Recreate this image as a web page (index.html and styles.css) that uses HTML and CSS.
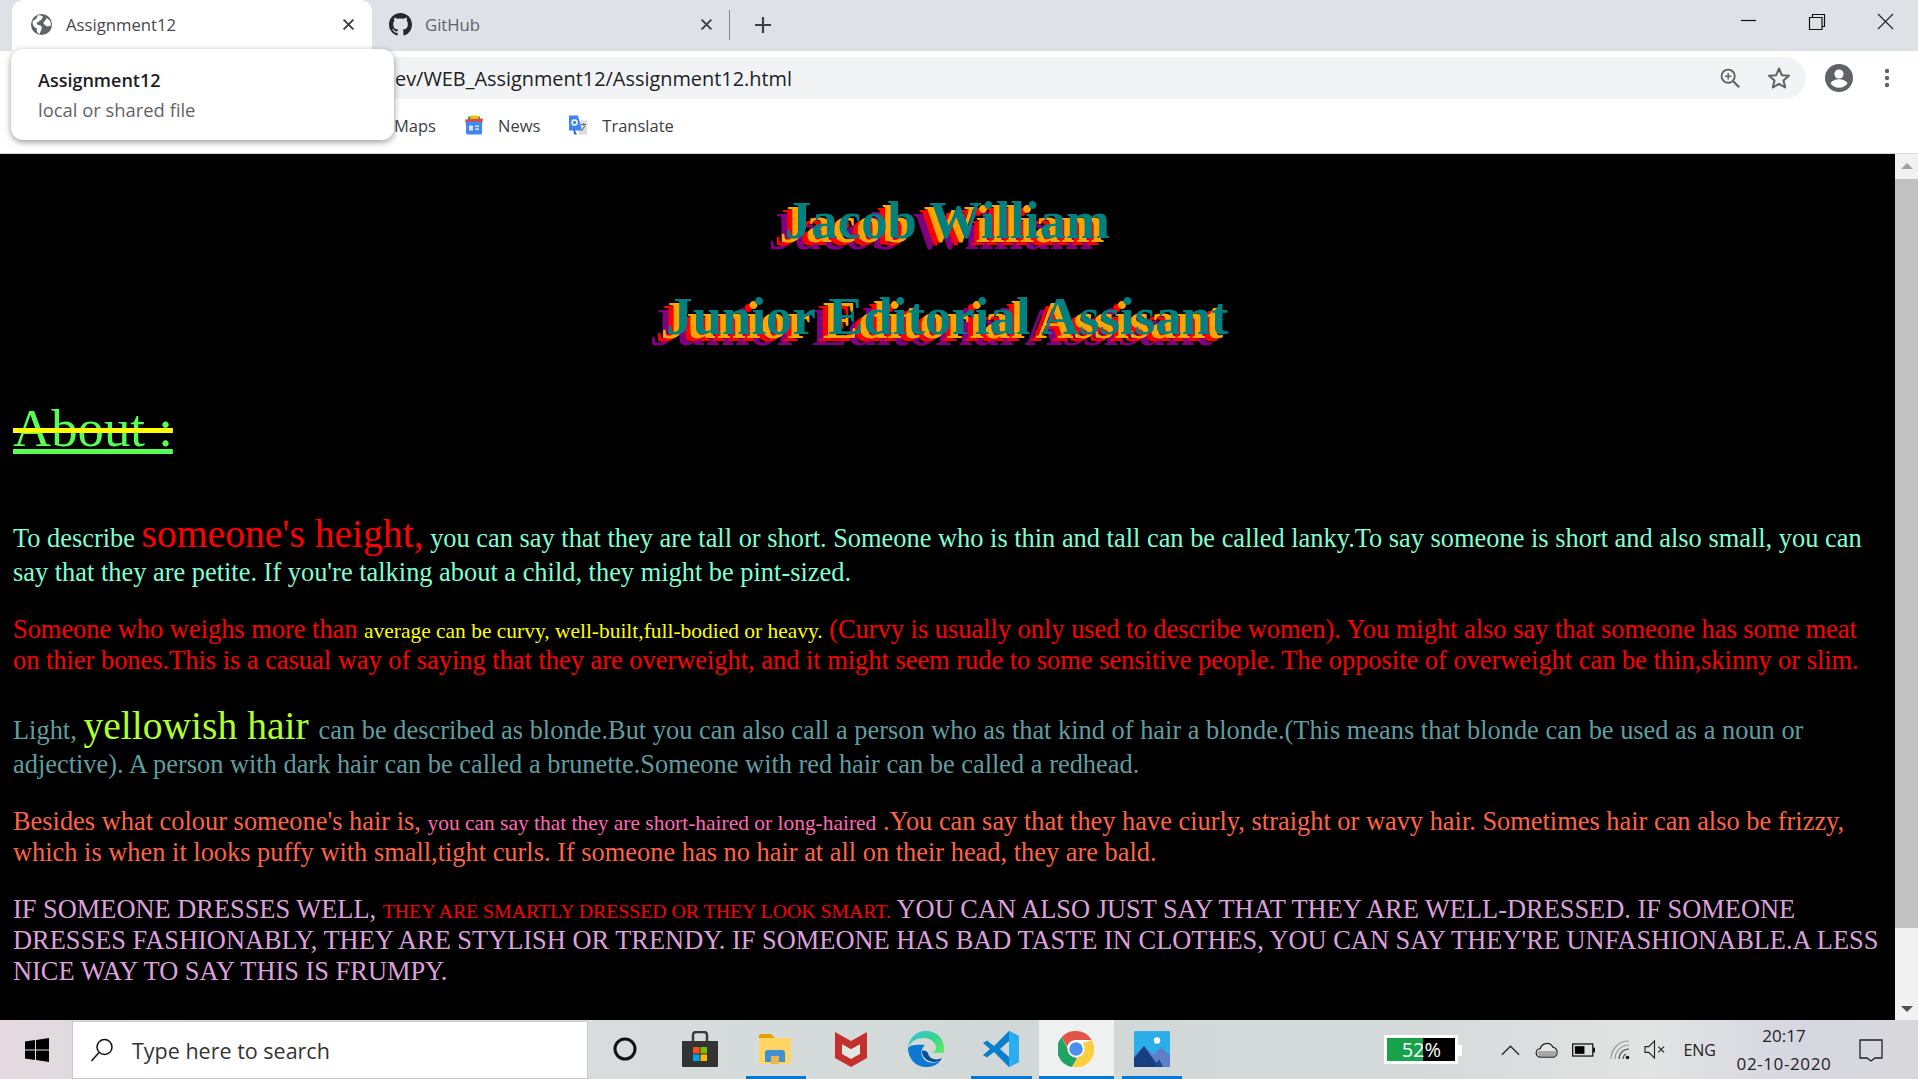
FILE: index.html
```html
<!DOCTYPE html>
<html lang="en">
<head>
<meta charset="utf-8">
<title>Assignment12</title>
<link rel="stylesheet" href="styles.css">
</head>
<body>
<div class="window">
  <header class="tabstrip">
    <div class="tab tab-active">
      <svg class="tab-icon" viewBox="0 0 24 24"><circle cx="12" cy="12" r="11" fill="#5f6368"/><path d="M3 8c3-1 5-3 5-6l5 1c1 2-1 4-3 5-1 2-3 1-3 3 0 2 4 1 5 3 1 2-1 5-2 8-3-1-3-4-3-6-3-1-5-4-4-8zM17 5l4 3 1 5-4 1c-2-1-4-2-4-4 1-2 3-2 3-5z" fill="#fff"/></svg>
      <span class="tab-title">Assignment12</span>
      <svg class="tab-close" viewBox="0 0 12 12"><path d="M1.500 1.500l9 9M10.500 1.500l-9 9" stroke="#3c4043" stroke-width="1.800" fill="none"/></svg>
    </div>
    <div class="tab">
      <svg class="tab-icon" viewBox="0 0 16 16"><path fill="#24292e" d="M8 0C3.58 0 0 3.58 0 8c0 3.54 2.29 6.53 5.47 7.59.4.07.55-.17.55-.38 0-.19-.01-.82-.01-1.49-2.01.37-2.53-.49-2.69-.94-.09-.23-.48-.94-.82-1.13-.28-.15-.68-.52-.01-.53.63-.01 1.08.58 1.23.82.72 1.21 1.87.87 2.33.66.07-.52.28-.87.51-1.07-1.78-.2-3.64-.89-3.64-3.95 0-.87.31-1.59.82-2.15-.08-.2-.36-1.02.08-2.12 0 0 .67-.21 2.2.82.64-.18 1.32-.27 2-.27s1.36.09 2 .27c1.53-1.04 2.2-.82 2.2-.82.44 1.1.16 1.92.08 2.12.51.56.82 1.27.82 2.15 0 3.07-1.87 3.75-3.65 3.95.29.25.54.73.54 1.48 0 1.07-.01 1.93-.01 2.2 0 .21.15.46.55.38A8.01 8.01 0 0 0 16 8c0-4.42-3.58-8-8-8z"/></svg>
      <span class="tab-title tab-title-dim">GitHub</span>
      <svg class="tab-close" viewBox="0 0 12 12"><path d="M1.500 1.500l9 9M10.500 1.500l-9 9" stroke="#3c4043" stroke-width="1.800" fill="none"/></svg>
    </div>
    <span class="tab-sep"></span>
    <svg class="tab-new" viewBox="0 0 18 18"><path d="M9 1v16M1 9h16" stroke="#3c4043" stroke-width="2.200" fill="none"/></svg>
    <div class="win-controls">
      <svg class="win-btn" viewBox="0 0 68 30"><path d="M26 13.500h15" stroke="#111" stroke-width="1.200"/></svg>
      <svg class="win-btn" viewBox="0 0 68 30"><path d="M29.500 10V7.500h12v12H39M26.500 10.500h12.500v12H26.500z" stroke="#111" stroke-width="1.200" fill="none"/></svg>
      <svg class="win-btn" viewBox="0 0 68 30"><path d="M27 7l15 15M42 7L27 22" stroke="#222" stroke-width="1.100" fill="none"/></svg>
    </div>
  </header>

  <div class="toolbar">
    <div class="omnibox">
      <span class="url">ev/WEB_Assignment12/Assignment12.html</span>
      <svg class="omni-zoom" viewBox="0 0 24 24"><circle cx="10" cy="10" r="7.200" fill="none" stroke="#5f6368" stroke-width="2"/><path d="M15.500 15.500l6.500 6.500" stroke="#5f6368" stroke-width="2.400"/><path d="M10 6.500v7M6.500 10h7" stroke="#5f6368" stroke-width="1.600"/></svg>
      <svg class="omni-star" viewBox="0 0 24 24"><path d="M12 2.500l2.800 6.700 7.200.6-5.500 4.700 1.700 7-6.200-3.700-6.200 3.700 1.700-7L2 9.800l7.200-.6z" fill="none" stroke="#5f6368" stroke-width="2" stroke-linejoin="round"/></svg>
    </div>
    <svg class="profile" viewBox="0 0 28 28"><circle cx="14" cy="14" r="14" fill="#5f6368"/><circle cx="14" cy="10" r="4.600" fill="#fff"/><path d="M5.500 19.500c1.500-3.200 5.500-4.200 8.500-4.200s7 1 8.500 4.200c-2 2.600-5 4.300-8.500 4.300s-6.500-1.700-8.500-4.300z" fill="#fff"/></svg>
    <svg class="kebab" viewBox="0 0 6 20"><circle cx="3" cy="3" r="2.200" fill="#5f6368"/><circle cx="3" cy="10" r="2.200" fill="#5f6368"/><circle cx="3" cy="17" r="2.200" fill="#5f6368"/></svg>
  </div>

  <nav class="bookmarks">
    <span class="bm">Maps</span>
    <span class="bm">
      <svg class="bm-icon" viewBox="0 0 20 20"><path d="M4 1h12v6H4z" fill="#34a853"/><path d="M7 0h7l1 5H6z" fill="#fbbc05"/><path d="M1 4l18-1-1 6H2z" fill="#ea4335"/><rect x="2" y="6" width="16" height="13" rx="1.500" fill="#4285f4"/><path d="M5 10h4v5H5zM11 10h4v1.500h-4zM11 13h4v1.500h-4z" fill="#dfe8fb"/></svg>
      News
    </span>
    <span class="bm">
      <svg class="bm-icon" viewBox="0 0 20 20"><path d="M9 5h10v14h-8z" fill="#dadce0"/><path d="M1 0h9l4 15H1z" fill="#4285f4"/><path d="M5 11l4 8h-3z" fill="#3367d6"/><circle cx="6.500" cy="7" r="2.500" fill="none" stroke="#fff" stroke-width="1.400"/><path d="M13 9h5M15.500 8v2M14 15l3-5" stroke="#5f6368" stroke-width="1"/></svg>
      Translate
    </span>
  </nav>

  <div class="viewport">
    <main class="page">
      <h1 class="title title-first">Jacob William</h1>
      <h1 class="title">Junior Editorial Assisant</h1>
      <h1 class="about"><span class="about-strike"><span class="about-under">About :</span></span></h1>
      <p class="p-aqua">To describe <span class="big-red">someone's height,</span> you can say that they are tall or short. Someone who is thin and tall can be called lanky.To say someone is short and also small, you can say that they are petite. If you're talking about a child, they might be pint-sized.</p>
      <p class="p-red">Someone who weighs more than <span class="small-yellow">average can be curvy, well-built,full-bodied or heavy.</span> (Curvy is usually only used to describe women). You might also say that someone has some meat on thier bones.This is a casual way of saying that they are overweight, and it might seem rude to some sensitive people. The opposite of overweight can be thin,skinny or slim.</p>
      <p class="p-cadet">Light, <span class="big-green">yellowish hair </span>can be described as blonde.But you can also call a person who as that kind of hair a blonde.(This means that blonde can be used as a noun or adjective). A person with dark hair can be called a brunette.Someone with red hair can be called a redhead.</p>
      <p class="p-tomato">Besides what colour someone's hair is, <span class="small-pink">you can say that they are short-haired or long-haired</span> .You can say that they have ciurly, straight or wavy hair. Sometimes hair can also be frizzy, which is when it looks puffy with small,tight curls. If someone has no hair at all on their head, they are bald.</p>
      <p class="p-plum">IF SOMEONE DRESSES WELL, <span class="small-red">THEY ARE SMARTLY DRESSED OR THEY LOOK SMART.</span> YOU CAN ALSO JUST SAY THAT THEY ARE WELL-DRESSED. IF SOMEONE DRESSES FASHIONABLY, THEY ARE STYLISH OR TRENDY. IF SOMEONE HAS BAD TASTE IN CLOTHES, YOU CAN SAY THEY'RE UNFASHIONABLE.A LESS NICE WAY TO SAY THIS IS FRUMPY.</p>
      <p class="p-gold">You might also describe how old someone looks, and there are plenty of polite words for this. A person in their fifties might be called middle-aged, and someone older might be called elderly.</p>
    </main>
    <aside class="scrollbar">
      <span class="arrow arrow-up"></span>
      <span class="thumb"></span>
      <span class="arrow arrow-down"></span>
    </aside>
  </div>

  <footer class="taskbar">
    <div class="start">
      <svg class="win-logo" viewBox="0 0 24 24"><path d="M0 3.500l10-1.400V11.500H0zM11 2l13-2v11.500H11zM0 12.500h10v9.500L0 20.500zM11 12.500h13V24l-13-2z" fill="#000"/></svg>
    </div>
    <div class="search">
      <svg class="search-icon" viewBox="0 0 24 24"><circle cx="14.500" cy="9" r="7.500" fill="none" stroke="#111" stroke-width="1.500"/><path d="M9 14.500L1.500 23" stroke="#111" stroke-width="1.500"/></svg>
      <span>Type here to search</span>
    </div>
    <div class="task"><svg class="cortana" viewBox="0 0 24 24"><circle cx="12" cy="12" r="10" fill="none" stroke="#111" stroke-width="3"/></svg></div>
    <div class="task"><svg class="app" viewBox="0 0 36 36"><path d="M11 10V4c0-2 1-3 3-3h8c2 0 3 1 3 3v6" fill="none" stroke="#3a3a3a" stroke-width="2.500"/><path d="M0 10h36v25c0 .5-.5 1-1 1H1c-.5 0-1-.5-1-1z" fill="#333"/><path d="M11 16h6.500v6.500H11z" fill="#f25022"/><path d="M18.500 16H25v6.500h-6.500z" fill="#7fba00"/><path d="M11 23.500h6.500V30H11z" fill="#00a4ef"/><path d="M18.500 23.500H25V30h-6.500z" fill="#ffb900"/></svg></div>
    <div class="task task-open"><svg class="app" viewBox="0 0 36 36"><path d="M2 5c0-1 1-2 2-2h10l4 4H2z" fill="#e0a000"/><path d="M2 7h32v24c0 1-1 2-2 2H4c-1 0-2-1-2-2z" fill="#ffd663"/><path d="M8 31V22c0-2 1-3 3-3h14c2 0 3 1 3 3v9h-6v-6h-8v6z" fill="#3f8fd4"/><path d="M14 25h8v8h-8z" fill="#e8b84a"/></svg></div>
    <div class="task"><svg class="app" viewBox="0 0 36 36"><path d="M2 1l16 9 16-9v26L18 36 2 27z" fill="#c3302e"/><path d="M9 13l9 5 9-5v10l-9 5-9-5z" fill="#e4e6e4"/><path d="M9 13l9 5 9-5v-1l-9 5-9-5z" fill="#c3302e"/></svg></div>
    <div class="task"><svg class="app" viewBox="0 0 36 36"><defs><linearGradient id="edgeA" x1="0" y1="0" x2="1" y2="1"><stop offset="0" stop-color="#35c1f1"/><stop offset=".5" stop-color="#36d48a"/><stop offset="1" stop-color="#66eb6e"/></linearGradient></defs><path d="M18 0C8 0 1 7 0 17c3-7 9-10 15-10 8 0 13 5 13 10 0 3-3 5-6 5h14V17C36 7 28 0 18 0z" fill="url(#edgeA)"/><path d="M0 17c0 11 8 19 18 19 6 0 11-2 14-6-6 3-14 2-17-3-3-5-1-11 2-13-8-1-15 0-17 3z" fill="#0c78cf"/><path d="M14 20c0 8 8 13 18 10l2-3c-6 3-13 1-14-5-1-2-4-3-6-2z" fill="#0b4f9c"/></svg></div>
    <div class="task task-open"><svg class="app" viewBox="0 0 36 36"><path d="M26 0l10 5v26l-10 5-15-15-7 5.500L0 24l7-6-7-6 4-2.500 7 5.500z" fill="#0a7fcc"/><path d="M26 0l10 5v26l-10 5z" fill="#2aaef0"/><path d="M26 10l-9 8 9 8z" fill="#d2d8d8"/></svg></div>
    <div class="task task-active task-open"><svg class="app" viewBox="0 0 36 36"><circle cx="18" cy="18" r="18" fill="#fff"/><path d="M18 0a18 18 0 0 1 15.600 9H18a9 9 0 0 0-8.700 6.700L3.500 6.500A18 18 0 0 1 18 0z" fill="#e05545"/><path d="M3.500 6.500l7.800 13.500a9 9 0 0 0 8 7L14 36A18 18 0 0 1 3.500 6.500z" fill="#1fa463"/><path d="M33.600 9A18 18 0 0 1 14 36l7.800-13.500A9 9 0 0 0 25 12z" fill="#fbcf3f"/><circle cx="18" cy="18" r="8.500" fill="#fff"/><circle cx="18" cy="18" r="6.800" fill="#4d8ef0"/></svg></div>
    <div class="task task-open"><svg class="app" viewBox="0 0 36 36"><rect width="36" height="36" rx="1.500" fill="#2aaeea"/><circle cx="23" cy="9.500" r="3.200" fill="#fff"/><path d="M0 36V25l10-10 9 9 8-8 9 9v11z" fill="#5f80c8"/><path d="M0 36V27l10-12 15 21z" fill="#153f7e"/><path d="M20 36l5-8 4 8z" fill="#1c4b91"/></svg></div>

    <div class="tray">
      <div class="battery-meter"><span class="battery-fill"></span><span class="battery-text">52%</span><span class="battery-nub"></span></div>
      <svg class="tray-ico chevron" viewBox="0 0 20 12"><path d="M1 11l9-9 9 9" fill="none" stroke="#222" stroke-width="1.300"/></svg>
      <svg class="tray-ico cloud" viewBox="0 0 26 18"><path d="M6 16.500a4.500 4.500 0 0 1-.5-9 7 7 0 0 1 13-1.500 5.500 5.500 0 0 1 1 10.500z" fill="#e6e6e6" stroke="#222" stroke-width="1.300"/><path d="M3 10h20l1 3-3 3H6l-3-2z" fill="#8a8a8a" opacity=".7"/></svg>
      <svg class="tray-ico batt" viewBox="0 0 24 14"><rect x=".7" y=".7" width="21" height="12.600" fill="none" stroke="#111" stroke-width="1.300"/><rect x="3" y="3" width="10" height="8" fill="#000"/><rect x="22" y="4.500" width="2" height="5" fill="#111"/></svg>
      <svg class="tray-ico wifi" viewBox="0 0 20 20"><path d="M1 19A18 18 0 0 1 19 1M5 19A14 14 0 0 1 19 5" fill="none" stroke="#999" stroke-width="1.200"/><path d="M9 19A10 10 0 0 1 19 9M13 19a6 6 0 0 1 3-5" fill="none" stroke="#555" stroke-width="1.200"/><circle cx="17.500" cy="17.500" r="1.800" fill="#111"/></svg>
      <svg class="tray-ico volume" viewBox="0 0 22 20"><path d="M1 7h4l6-6v18l-6-6H1z" fill="none" stroke="#222" stroke-width="1.200"/><path d="M15 7l6 6M21 7l-6 6" stroke="#222" stroke-width="1.200"/></svg>
      <span class="lang">ENG</span>
      <div class="clock"><span>20:17</span><span class="date">02-10-2020</span></div>
      <svg class="notify" viewBox="0 0 24 24"><path d="M1 2h22v18h-7l-4 3-4-3H1z" fill="none" stroke="#222" stroke-width="1.300"/></svg>
    </div>
  </footer>

  <div class="tooltip">
    <div class="tooltip-title">Assignment12</div>
    <div class="tooltip-sub">local or shared file</div>
  </div>
</div>
</body>
</html>
```

FILE: styles.css
```css
* { box-sizing: border-box; }
html, body { margin: 0; height: 100%; overflow: hidden; }
body { font-family: "Liberation Serif", serif; background: #000; }

.window { position: relative; height: 1079px; display: flex; flex-direction: column; }

/* Tab strip */
.tabstrip {
  height: 51px; flex: none; background: #dee1e6; display: flex; align-items: center;
  padding-left: 12px; font-family: "Open Sans", sans-serif; font-size: 16.700px; color: #45494e;
}
.tab { width: 360px; height: 51px; display: flex; align-items: center; padding: 0 17px 2px 18px; }
.tab-active { background: #fff; border-radius: 12px 12px 0 0; }
.tab + .tab { width: 357px; padding-left: 17px; padding-right: 16px; }
.tab-icon { width: 23px; height: 23px; flex: none; margin-right: 13px; }
.tab-title { flex: 1; }
.tab-title-dim { color: #5f6368; }
.tab-close { width: 13px; height: 13px; flex: none; }
.tab-sep { width: 1px; height: 30px; background: #80868b; flex: none; margin-bottom: 2px; }
.tab-new { width: 18px; height: 18px; margin: 0 0 2px 24px; flex: none; }
.win-controls { margin: 7px -1px 0 auto; display: flex; align-self: flex-start; }
.win-btn { width: 68px; height: 30px; display: block; }

/* Toolbar */
.toolbar { height: 51px; flex: none; background: #fff; display: flex; align-items: center; position: relative; padding-top: 3px; }
.omnibox {
  margin-left: 120px; width: 1686px; height: 42px; border-radius: 0 21px 21px 0; background: #f1f3f4;
  display: flex; align-items: center; padding-left: 275px;
  font-family: "Open Sans", sans-serif;
}
.url { flex: 1; font-size: 19.900px; color: #202124; }
.omni-zoom { width: 22px; height: 22px; flex: none; margin-right: 26px; }
.omni-star { width: 24px; height: 24px; flex: none; margin-right: 15px; }
.profile { width: 28px; height: 28px; flex: none; margin-left: 19px; }
.kebab { width: 6px; height: 20px; flex: none; margin-left: 31px; }

/* Bookmarks */
.bookmarks {
  height: 52px; flex: none; background: #fff; border-bottom: 1px solid #d9d9d9;
  display: flex; align-items: center; padding: 0 0 5px 394px; gap: 28px;
  font-family: "Open Sans", sans-serif; font-size: 16.500px; color: #3c4043;
}
.bm { display: flex; align-items: center; gap: 14px; }
.bm-icon { width: 20px; height: 21px; flex: none; }

/* Page */
.viewport { flex: 1; min-height: 0; display: flex; }
.page { flex: 1; min-width: 0; background: #000; overflow: hidden; padding: 0 13px; font-size: 26.400px; }
.title {
  margin: 35.400px 0; font-size: 52.800px; font-weight: 700; text-align: center; color: #008080;
  text-shadow: -5.500px 3.500px 0 #ffa500, -10.500px 7px 0 #f00, -16.500px 11px 0 #800080;
}
.title-first { margin-top: 36.400px; }
.about { margin: 52px 0 53px; font-size: 52.800px; font-weight: 400; color: #5f5; }
.about-strike { text-decoration: line-through #ff0 5px; }
.about-under { text-decoration: underline #5f5 5px; }
p { margin: 26.400px 0; }
.p-aqua { color: #7fffd4; }
.p-red { color: #f00; }
.p-cadet { color: #5f9ea0; }
.p-tomato { color: #ff6347; }
.p-plum { color: #dda0dd; }
.p-gold { margin-top: 27.200px; color: #ffd700; }
.big-red { font-size: 39.600px; color: #f00; }
.big-green { font-size: 39.600px; color: #adff2f; }
.small-yellow { font-size: 21.450px; color: #ff0; }
.small-pink { font-size: 21.450px; color: #ff69b4; }
.small-red { font-size: 19.800px; color: #f00; }

/* Scrollbar */
.scrollbar { width: 23px; flex: none; background: #f1f1f1; display: flex; flex-direction: column; align-items: stretch; }
.arrow { height: 23px; flex: none; display: flex; justify-content: center; align-items: center; }
.arrow::before { content: ""; border-left: 6px solid transparent; border-right: 6px solid transparent; }
.arrow-up::before { border-bottom: 6px solid #a3a3a3; }
.arrow-down::before { border-top: 6px solid #505050; }
.thumb { height: 749px; background: #c1c1c1; margin: 2px 0 auto; }

/* Taskbar */
.taskbar {
  height: 59px; flex: none; display: flex; align-items: stretch;
  background: linear-gradient(90deg, #e4d9e0 0, #e0dadf 70px, #d8dcdc 600px, #d2d8d8 1000px, #d4d9d9 1400px, #e2e3e3 1650px, #d6d6e0 1800px, #d8d8dc 100%);
  font-family: "Open Sans", sans-serif; color: #222;
}
.start { width: 73px; flex: none; display: flex; align-items: center; justify-content: center; }
.win-logo { width: 24px; height: 24px; }
.search {
  width: 514px; flex: none; margin: 2px 0 1px; background: #fff; outline: 1px solid #c8c8c8;
  display: flex; align-items: center; padding: 1px 0 0 17px; gap: 18px; font-size: 21.500px; color: #333;
}
.search-icon { width: 24px; height: 24px; flex: none; margin-top: -2px; }
.task { position: relative; width: 75.300px; flex: none; display: flex; align-items: center; justify-content: center; padding-bottom: 1px; }
.task-open::after { content: ""; position: absolute; left: 8px; right: 7px; bottom: 0; height: 3px; background: #0078d4; }
.task-active { background-color: #eff0f0; }
.task-active::after { left: 0; right: 0; }
.cortana { width: 24px; height: 24px; }
.app { width: 36px; height: 36px; }

.tray { flex: 1; display: flex; align-items: center; min-width: 0; }
.battery-meter {
  position: relative; width: 74px; height: 29px; margin-left: 195px; border: 3px solid #fff;
  background: #000; display: flex; align-items: center; justify-content: center; flex: none;
}
.battery-fill { position: absolute; left: 0; top: 0; bottom: 0; width: 52%; background: #16a34a; }
.battery-text { position: relative; color: #fff; font-size: 20px; line-height: 1; }
.battery-nub { position: absolute; right: -7px; top: 7px; width: 4px; height: 11px; background: #fff; }
.tray-ico { flex: none; }
.chevron { width: 19px; height: 12px; margin-left: 43px; }
.cloud { width: 25px; height: 18px; margin-left: 15px; }
.batt { width: 23px; height: 14px; margin-left: 12px; }
.wifi { width: 20px; height: 20px; margin-left: 15px; }
.volume { width: 21px; height: 19px; margin-left: 14px; }
.lang { font-size: 16px; margin-left: 18px; flex: none; }
.clock { width: 120px; margin-left: 8px; flex: none; display: flex; flex-direction: column; align-items: center; font-size: 17px; line-height: 28px; }
.date { letter-spacing: .6px; }
.notify { width: 24px; height: 24px; margin-left: 15px; flex: none; }

/* Hover card */
.tooltip {
  position: absolute; left: 11px; top: 49px; width: 383px; height: 91px; background: #fff;
  border-radius: 12px; box-shadow: 0 2px 6px rgba(60, 64, 67, .55); padding: 17px 27px;
  font-family: "Open Sans", sans-serif;
}
.tooltip-title { font-size: 18px; font-weight: 600; color: #202124; line-height: 28px; }
.tooltip-sub { font-size: 18.400px; color: #5f6368; line-height: 32px; }
```
